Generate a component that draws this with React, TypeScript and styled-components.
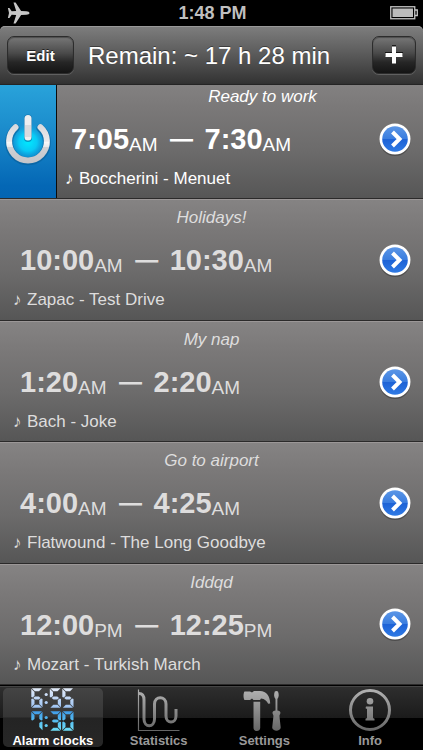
import React from "react";
import styled, { createGlobalStyle, css } from "styled-components";

const GlobalStyle = createGlobalStyle`
  * { box-sizing: border-box; }
  body {
    margin: 0;
    background: #000;
    font-family: "Liberation Sans", Arial, sans-serif;
    -webkit-font-smoothing: antialiased;
  }
  ul { list-style: none; margin: 0; padding: 0; }
  button { font: inherit; color: inherit; cursor: pointer; }
`;

const Screen = styled.div`
  display: flex;
  flex-direction: column;
  min-height: 100vh;
  overflow: hidden;
`;

const StatusBar = styled.header`
  display: grid;
  grid-template-columns: 1fr auto 1fr;
  align-items: center;
  height: 26px;
  padding: 0 5px 0 7px;
  color: #bfbfbf;
  font-size: 18px;
  font-weight: bold;
  line-height: 26px;

  svg { display: block; }
  svg:last-child { justify-self: end; }
`;

const NavBar = styled.nav`
  display: flex;
  align-items: center;
  justify-content: space-between;
  height: 59px;
  padding: 0 7px;
  position: relative;
  z-index: 1;
  border-radius: 5px 5px 0 0;
  border-bottom: 1px solid #242424;
  background: linear-gradient(#7e7e7e, #5d5d5d 45%, #353535 96%, #303030);
  box-shadow: inset 0 1px 0 #999;
`;

const NavTitle = styled.h1`
  margin: 0;
  flex: 1;
  padding: 2px 0 0 14px;
  color: #fff;
  font-size: 24px;
  font-weight: normal;
  line-height: 28px;
  white-space: nowrap;
  text-shadow: 0 -1px 0 rgba(0, 0, 0, 0.4);
`;

const NavButton = styled.button<{ $square?: boolean }>`
  display: flex;
  align-items: center;
  justify-content: center;
  width: ${(p) => (p.$square ? 44 : 67)}px;
  height: 38px;
  padding: 0;
  border: 1px solid #2c2c2c;
  border-radius: 7px;
  background: linear-gradient(#777, #4a4a4a 45%, #262626 70%, #141414);
  box-shadow: inset 0 1px 1px rgba(0, 0, 0, 0.35), 0 1px 0 #606060;
  color: #fff;
  font-size: 15px;
  font-weight: bold;
  text-shadow: 0 -1px 0 rgba(0, 0, 0, 0.6);
`;

const List = styled.ul`
  display: flex;
  flex: 1;
  flex-direction: column;
  margin-top: -7px;
`;

const Row = styled.li<{ $on?: boolean }>`
  display: flex;
  flex: 1;
  align-items: stretch;
  border-top: 1px solid #9b9797;
  border-bottom: 1px solid #2b2a2a;
  background: linear-gradient(#858383, #7a7878 25%, #6c6b6b 60%, #565656);
  color: ${(p) => (p.$on ? "#fff" : "#dedddd")};
`;

const PowerButton = styled.button`
  display: flex;
  align-items: center;
  justify-content: center;
  width: 57px;
  padding: 0;
  border: 0;
  border-right: 1px solid #0b0b0b;
  background: linear-gradient(#2ba6dc, #1c8dcd 40%, #0467b5 90%, #0365b3);
`;

const Body = styled.div`
  flex: 1;
  min-width: 0;
  padding-top: 8px;
`;

const Label = styled.div<{ $on?: boolean }>`
  padding-left: ${(p) => (p.$on ? 101 : 56)}px;
  font-size: 17px;
  font-style: italic;
  line-height: 20px;
  text-align: center;
  white-space: nowrap;
`;

const Times = styled.div<{ $on?: boolean }>`
  display: flex;
  padding-left: ${(p) => (p.$on ? 14 : 20)}px;
  margin-top: 14px;
  height: 36px;
  line-height: 36px;
  white-space: nowrap;
`;

const Time = styled.time`
  display: flex;
  font-size: 29px;
  font-weight: bold;
`;

const Period = styled.span`
  padding-top: 6px;
  font-size: 19px;
  font-weight: normal;
`;

const Dash = styled.span`
  margin: 0 12px 0 13px;
  font-size: 22px;
  -webkit-text-stroke: 1px currentColor;
`;

const Song = styled.div<{ $on?: boolean }>`
  display: flex;
  gap: 4px;
  padding-left: ${(p) => (p.$on ? 8 : 13)}px;
  margin-top: 12px;
  font-size: 17px;
  line-height: 20px;
  white-space: nowrap;
`;

const Note = styled.span`
  width: 10px;
`;

const DetailButton = styled.button`
  display: flex;
  align-items: center;
  justify-content: center;
  width: 56px;
  padding: 0;
  border: 0;
  background: none;
`;

const TabBar = styled.nav`
  display: grid;
  grid-template-columns: repeat(4, 1fr);
  height: 65px;
  padding-top: 2px;
  border-top: 1px solid #000;
  background: linear-gradient(#454545 0 1px, #2e2e2e 1px, #1b1b1b 32px, #000 32px);
`;

const Tab = styled.a<{ $active?: boolean }>`
  display: flex;
  flex-direction: column;
  align-items: center;
  margin: 0 3px;
  height: 59px;
  border-radius: 5px;
  color: #999;
  font-size: 13px;
  font-weight: bold;
  line-height: 17px;
  text-decoration: none;
  white-space: nowrap;

  svg { display: block; flex: none; }

  ${(p) =>
    p.$active &&
    css`
      color: #fff;
      background: linear-gradient(#444, #353535 29px, #242424 30px, #272727);
    `}
`;

function PlaneIcon() {
  return (
    <svg width="23" height="24" viewBox="0 0 23 24" aria-label="Airplane mode">
      <path
        fill="#c6c6c6"
        d="M22.5 12c0 .9-1.3 1.7-3.2 1.8l-5.200.2L8.600 22.500H6.500L9.200 14l-4.500-.3-2.300 3.300H.9L2 12 .9 7h1.500l2.300 3.300L9.200 10 6.500 1.500h2.100L14.100 10l5.200.2c1.900.1 3.200.9 3.200 1.800z"
      />
    </svg>
  );
}

function BatteryIcon() {
  return (
    <svg width="28" height="14" viewBox="0 0 28 14" aria-label="Battery full">
      <rect x="0.750" y="0.750" width="24" height="12" fill="none" stroke="#c4c4c4" strokeWidth="1.300" />
      <rect x="2.500" y="2.500" width="20.500" height="8.500" fill="#bcbcbc" />
      <path d="M25 4h2.300v5.500H25" fill="none" stroke="#c4c4c4" strokeWidth="1.300" />
    </svg>
  );
}

function PlusIcon() {
  return (
    <svg width="20" height="20" viewBox="0 0 20 20" aria-hidden="true">
      <path d="M10 0v18M1 9h18" stroke="#000" strokeOpacity="0.7" strokeWidth="4" />
      <path d="M10 1.500v17M1.500 10h17" stroke="#fff" strokeWidth="4" />
    </svg>
  );
}

function PowerIcon() {
  return (
    <svg width="52" height="54" viewBox="0 0 52 54" aria-hidden="true">
      <defs>
        <radialGradient id="glow">
          <stop offset="0" stopColor="#00eaff" />
          <stop offset="0.45" stopColor="#08cdf8" stopOpacity="0.95" />
          <stop offset="1" stopColor="#1391d5" stopOpacity="0.1" />
        </radialGradient>
        <linearGradient id="metal" gradientUnits="userSpaceOnUse" x1="0" y1="3" x2="0" y2="51">
          <stop offset="0" stopColor="#fff" />
          <stop offset="0.18" stopColor="#ececee" />
          <stop offset="0.2" stopColor="#d8d9dd" />
          <stop offset="0.55" stopColor="#e9e9ec" />
          <stop offset="0.56" stopColor="#fafafa" />
          <stop offset="0.66" stopColor="#e9e9eb" />
          <stop offset="0.67" stopColor="#d0d1d5" />
          <stop offset="1" stopColor="#c4c5c9" />
        </linearGradient>
      </defs>
      <circle cx="26" cy="30" r="20" fill="url(#glow)" />
      <g fill="none" strokeLinecap="round">
        <path d="M13.500 16.200a18.900 18.900 0 1 0 25 0M26 6.500v19.500" stroke="#075b93" strokeOpacity="0.55" strokeWidth="8" />
        <path d="M13.500 15.300a18.900 18.900 0 1 0 25 0" stroke="url(#metal)" strokeWidth="6" />
        <path d="M26 6.500v18.500" stroke="#eeeef0" strokeWidth="7" />
        <path d="M26 13v12" stroke="#d9dade" strokeWidth="6" strokeLinecap="butt" />
      </g>
    </svg>
  );
}

function DetailIcon() {
  return (
    <svg width="34" height="36" viewBox="0 0 34 36" aria-hidden="true">
      <defs>
        <linearGradient id="disc" x1="0" y1="0" x2="0" y2="1">
          <stop offset="0" stopColor="#5b96e6" />
          <stop offset="0.49" stopColor="#3a7ddf" />
          <stop offset="0.51" stopColor="#1d62d6" />
          <stop offset="1" stopColor="#2f7ae4" />
        </linearGradient>
      </defs>
      <circle cx="17" cy="19.500" r="15.500" fill="#222" fillOpacity="0.4" />
      <circle cx="17" cy="18" r="15.500" fill="#fff" />
      <circle cx="17" cy="18" r="12.800" fill="url(#disc)" />
      <path d="M14.500 11l7 7-7 7" fill="none" stroke="#fff" strokeWidth="4" />
    </svg>
  );
}

/* Seven-segment shapes in a 12 x 20 cell, keyed by the usual a-g names. */
const SEGMENTS: Record<string, string> = {
  a: "0.800,0.300 11,0.300 8,3.300 3.800,3.300",
  b: "11.500,0.800 11.500,9 10.300,9.600 8.300,8 8.300,4",
  c: "11.500,11 11.500,19.200 8.300,16 8.300,12 10.300,10.400",
  d: "0.800,19.700 11,19.700 8,16.700 3.800,16.700",
  e: "0.300,11 0.300,19.200 3.500,16 3.500,12 1.500,10.400",
  f: "0.300,0.800 0.300,9 1.500,9.600 3.500,8 3.500,4",
  g: "2.200,10 4,8.500 7.800,8.500 9.600,10 7.800,11.500 4,11.500",
};

const READOUTS = [
  { y: 0, fill: "url(#lcdPale)", digits: ["acdefg", "acdfg", "acdfg"] },
  { y: 23, fill: "url(#lcdBlue)", digits: ["abcf", "abcdg", "abcdef"] },
];
const DIGIT_X = [0, 18.500, 31];

function ClockIcon() {
  return (
    <svg width="44" height="44" viewBox="0 0 44 44" aria-hidden="true">
      <defs>
        <linearGradient id="lcdPale" gradientUnits="userSpaceOnUse" x1="0" y1="0" x2="0" y2="20">
          <stop offset="0" stopColor="#e6eefb" />
          <stop offset="1" stopColor="#9cc2f2" />
        </linearGradient>
        <linearGradient id="lcdBlue" gradientUnits="userSpaceOnUse" x1="0" y1="0" x2="0" y2="20">
          <stop offset="0" stopColor="#3f9be8" />
          <stop offset="1" stopColor="#6fdff8" />
        </linearGradient>
      </defs>
      {READOUTS.map((r) => (
        <g key={r.y} transform={`translate(0 ${r.y})`} fill={r.fill}>
          {r.digits.map((segs, i) => (
            <g key={i} transform={`translate(${DIGIT_X[i]} 0)`}>
              {segs.split("").map((s) => (
                <polygon key={s} points={SEGMENTS[s]} />
              ))}
            </g>
          ))}
          <circle cx="15.200" cy="6.500" r="1.600" />
          <circle cx="15.200" cy="14.500" r="1.600" />
        </g>
      ))}
    </svg>
  );
}

function GreyFade({ id }: { id: string }) {
  return (
    <defs>
      <linearGradient id={id} gradientUnits="userSpaceOnUse" x1="0" y1="0" x2="0" y2="44">
        <stop offset="0" stopColor="#b4b4b4" />
        <stop offset="1" stopColor="#646464" />
      </linearGradient>
    </defs>
  );
}

function StatisticsIcon() {
  return (
    <svg width="44" height="44" viewBox="0 0 44 44" aria-hidden="true" fill="none" stroke="url(#fadeStats)">
      <GreyFade id="fadeStats" />
      <path d="M1.500 1.500v41h41" strokeWidth="1.200" />
      <path
        d="M2 5.500c4 0 5 2.500 5 6.500v19c0 9 10.500 9 10.500 0V16c0-8.500 11.500-8.500 11.500 0v12c0 8 10 8 10 0v-7"
        strokeWidth="3"
      />
    </svg>
  );
}

function SettingsIcon() {
  return (
    <svg width="44" height="44" viewBox="0 0 44 44" aria-hidden="true" fill="url(#fadeTools)">
      <GreyFade id="fadeTools" />
      <path d="M2.500 3.500H8L10 4.500l2-1.500h6c6.500.3 10 5 10.200 12.500l-2 .3c-1.500-3-3.500-4.800-7.200-5.300l-1 1.500h-6.500L10 10.500 8 12H2.500c-1.300-2-1.300-6.500 0-8.500z" />
      <path d="M11.500 13.800h6.700V40c0 4-6.700 4-6.700 0z" />
      <path d="M32.800 3.500c1-.8 2.200-.8 3.200 0 1.200 3 .9 5.500-.6 7.500v11.500c1.800.2 3.200 1 3 2.500-.2 1.300-1.200 2-.9 3.500l1.200 11c-.3 4.200-8.200 4.200-8.500 0l1.200-11c.3-1.500-.7-2.200-.9-3.500-.2-1.500 1.200-2.300 3-2.500V11c-1.500-2-1.900-4.500-.7-7.500z" />
    </svg>
  );
}

function InfoIcon() {
  return (
    <svg width="44" height="44" viewBox="0 0 44 44" aria-hidden="true" fill="url(#fadeInfo)">
      <GreyFade id="fadeInfo" />
      <circle cx="22" cy="22" r="19.500" fill="none" stroke="url(#fadeInfo)" strokeWidth="3" />
      <circle cx="22" cy="13.300" r="3.300" />
      <path d="M18 18.500h7v11.500l1.500.8v1.700h-9v-1.700l1.500-.8V21l-1.500-.8z" />
    </svg>
  );
}

type Moment = { clock: string; period: string };
type Alarm = { name: string; from: Moment; to: Moment; song: string; on?: boolean };

const am = (clock: string): Moment => ({ clock, period: "AM" });
const pm = (clock: string): Moment => ({ clock, period: "PM" });

const ALARMS: Alarm[] = [
  { name: "Ready to work", from: am("7:05"), to: am("7:30"), song: "Boccherini - Menuet", on: true },
  { name: "Holidays!", from: am("10:00"), to: am("10:30"), song: "Zapac - Test Drive" },
  { name: "My nap", from: am("1:20"), to: am("2:20"), song: "Bach - Joke" },
  { name: "Go to airport", from: am("4:00"), to: am("4:25"), song: "Flatwound - The Long Goodbye" },
  { name: "Iddqd", from: pm("12:00"), to: pm("12:25"), song: "Mozart - Turkish March" },
];

const TABS = [
  { label: "Alarm clocks", Icon: ClockIcon },
  { label: "Statistics", Icon: StatisticsIcon },
  { label: "Settings", Icon: SettingsIcon },
  { label: "Info", Icon: InfoIcon },
];

function TimeText({ value }: { value: Moment }) {
  return (
    <Time>
      {value.clock}
      <Period>{value.period}</Period>
    </Time>
  );
}

function AlarmRow({ alarm }: { alarm: Alarm }) {
  const { name, from, to, song, on } = alarm;
  return (
    <Row $on={on}>
      {on && (
        <PowerButton aria-label={`Turn off ${name}`}>
          <PowerIcon />
        </PowerButton>
      )}
      <Body>
        <Label $on={on}>{name}</Label>
        <Times $on={on}>
          <TimeText value={from} />
          <Dash>—</Dash>
          <TimeText value={to} />
        </Times>
        <Song $on={on}>
          <Note>♪</Note>
          <span>{song}</span>
        </Song>
      </Body>
      <DetailButton aria-label={`Edit ${name}`}>
        <DetailIcon />
      </DetailButton>
    </Row>
  );
}

export default function App() {
  return (
    <Screen>
      <GlobalStyle />
      <StatusBar>
        <PlaneIcon />
        <span>1:48 PM</span>
        <BatteryIcon />
      </StatusBar>
      <NavBar>
        <NavButton>Edit</NavButton>
        <NavTitle>Remain: ~ 17 h 28 min</NavTitle>
        <NavButton $square aria-label="Add alarm">
          <PlusIcon />
        </NavButton>
      </NavBar>
      <List>
        {ALARMS.map((alarm) => (
          <AlarmRow key={alarm.name} alarm={alarm} />
        ))}
      </List>
      <TabBar>
        {TABS.map(({ label, Icon }, i) => (
          <Tab key={label} href="#" $active={i === 0} aria-current={i === 0 ? "page" : undefined}>
            <Icon />
            {label}
          </Tab>
        ))}
      </TabBar>
    </Screen>
  );
}
